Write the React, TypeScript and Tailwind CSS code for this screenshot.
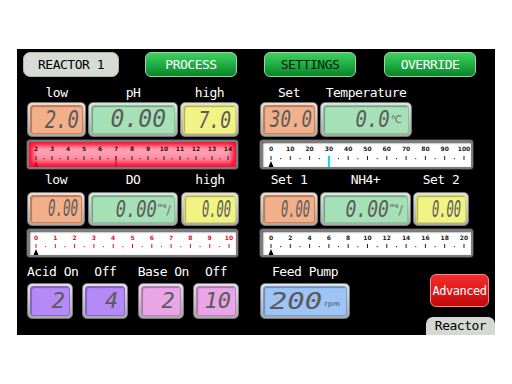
import React from "react";

type DisplayProps = {
  w: string;
  h: string;
  fill: string;
  edge: string;
  pr: string;
  children: React.ReactNode;
};

function Display({ w, h, fill, edge, pr, children }: DisplayProps) {
  return (
    <div
      className={`${w} ${h} shrink-0 rounded-[5px] border border-[#7a7a7a] bg-linear-to-b from-[#e2e2e2] to-[#a8a8a8] p-[2px]`}
    >
      <div
        className={`flex h-full w-full items-center justify-end overflow-hidden rounded-[3px] border ${edge} ${fill} ${pr} shadow-[inset_1px_1px_1px_rgba(0,0,0,0.3)]`}
      >
        {children}
      </div>
    </div>
  );
}

function Seg({ v, cls }: { v: string; cls: string }) {
  return (
    <span
      className={`inline-block whitespace-nowrap font-['DejaVu_Sans_Mono',monospace] italic leading-none text-[#5a5a5a] ${cls}`}
    >
      {v}
    </span>
  );
}

function MgL() {
  return (
    <span className="ml-[1px] inline-flex items-center font-['DejaVu_Sans',sans-serif] text-[#777777] leading-none">
      <span className="self-start text-[5px] font-bold">mg</span>
      <span className="text-[13px]">/</span>
    </span>
  );
}

type GaugeProps = {
  wCls: string;
  hCls: string;
  w: number;
  h: number;
  labels: string[];
  x0: number;
  step: number;
  red?: boolean;
  labelColor: string;
  tickColor: string;
  pointerColor: string;
  marker?: { x: number; color: string; width: number };
};

function Gauge({
  wCls,
  hCls,
  w,
  h,
  labels,
  x0,
  step,
  red,
  labelColor,
  tickColor,
  pointerColor,
  marker,
}: GaugeProps) {
  const iw = w - 6;
  const ih = h - 6;
  const inner = red
    ? "bg-linear-to-b from-[#ffb8c4] via-[#ff9aac] to-[#ff7088] shadow-[inset_0_0_5px_4px_#ff0a30]"
    : "bg-white shadow-[inset_1px_1px_2px_rgba(0,0,0,0.7)]";
  return (
    <div className={`${wCls} ${hCls} shrink-0 rounded-[4px] bg-[#2e2e2e] p-[1px]`}>
      <div className="h-full w-full rounded-[3px] border-2 border-[#7c7c7c]">
        <div className={`h-full w-full ${inner}`}>
          <svg width={iw} height={ih} className="block">
            {labels.map((l, i) => {
              const x = x0 + i * step;
              return (
                <g key={i}>
                  <text
                    x={x}
                    y={8.5}
                    fontSize={6}
                    fontWeight={700}
                    fontFamily="DejaVu Sans, sans-serif"
                    textAnchor="middle"
                    fill={labelColor}
                  >
                    {l}
                  </text>
                  <rect x={x - 0.5} y={ih - 11} width={1} height={4} fill={tickColor} />
                  {i < labels.length - 1 && (
                    <rect x={x + step / 2 - 0.5} y={ih - 9} width={1} height={1.2} fill={tickColor} />
                  )}
                </g>
              );
            })}
            {marker && (
              <rect
                x={marker.x - marker.width / 2}
                y={ih - 11}
                width={marker.width}
                height={11}
                fill={marker.color}
              />
            )}
            <polygon
              points={`${x0 - 2.5},${ih} ${x0 + 2.5},${ih} ${x0},${ih - 6}`}
              fill={pointerColor}
            />
          </svg>
        </div>
      </div>
    </div>
  );
}

function Label({ w, text }: { w: string; text: string }) {
  return (
    <div className={`${w} shrink-0 whitespace-nowrap text-center text-[13px] leading-none tracking-[-0.5px] text-white`}>
      {text}
    </div>
  );
}

function GreenBtn({ text, dark, ml }: { text: string; dark?: boolean; ml: string }) {
  return (
    <div
      className={`${ml} flex h-[25px] w-[92px] items-center justify-center rounded-[6px] border border-[#98d6a4] bg-linear-to-b from-[#3fd060] via-[#1fae44] to-[#0a8429] text-[13px] tracking-[-0.5px] ${
        dark ? "text-[#08200e]" : "text-white"
      }`}
    >
      {text}
    </div>
  );
}

const orange = "bg-[#f2b08a]";
const orangeEdge = "border-[#e4793f]";
const green = "bg-[#a6e0b6]";
const greenEdge = "border-[#7fc996]";
const yellow = "bg-[#f1f385]";
const yellowEdge = "border-[#d9db52]";
const purple = "bg-[#b58af7]";
const purpleEdge = "border-[#8f5fe0]";
const pink = "bg-[#e8a6e6]";
const pinkEdge = "border-[#cc78c9]";
const blue = "bg-[#9dc4f5]";
const blueEdge = "border-[#6f9fe0]";

export default function App() {
  const ph = ["2", "3", "4", "5", "6", "7", "8", "9", "10", "11", "12", "13", "14"];
  const temp = ["0", "10", "20", "30", "40", "50", "60", "70", "80", "90", "100"];
  const dO = ["0", "1", "2", "3", "4", "5", "6", "7", "8", "9", "10"];
  const nh = ["0", "2", "4", "6", "8", "10", "12", "14", "16", "18", "20"];

  return (
    <div className="flex h-[384px] w-[512px] items-center justify-center bg-white font-['DejaVu_Sans_Mono',monospace]">
      <div className="flex h-[286px] w-[478px] flex-col bg-black pt-[3px]">
        {/* top buttons */}
        <div className="flex h-[25px] shrink-0 pl-[6px]">
          <div className="flex h-[25px] w-[96px] items-center justify-center rounded-[7px] border border-[#aeb6ab] bg-[#d6dcd3] text-[13px] tracking-[-0.5px] text-black">
            REACTOR 1
          </div>
          <GreenBtn text="PROCESS" ml="ml-[26px]" />
          <GreenBtn text="SETTINGS" dark ml="ml-[27px]" />
          <GreenBtn text="OVERRIDE" ml="ml-[28px]" />
        </div>

        <div className="mt-[7px] flex flex-1 pl-[9px]">
          {/* left column */}
          <div className="flex w-[213px] shrink-0 flex-col">
            <div className="flex h-[17px] items-center gap-[2px] pl-[1px]">
              <Label w="w-[59px]" text="low" />
              <Label w="w-[90px]" text="pH" />
              <Label w="w-[59px]" text="high" />
            </div>
            <div className="mt-[1px] flex gap-[2px] pl-[1px]">
              <Display w="w-[59px]" h="h-[35px]" fill={orange} edge={orangeEdge} pr="pr-[3px]">
                <Seg v="2.0" cls="text-[19px] scale-y-[1.3]" />
              </Display>
              <Display w="w-[90px]" h="h-[35px]" fill={green} edge={greenEdge} pr="pr-[8px]">
                <Seg v="0.00" cls="text-[23px] scale-y-[1.05]" />
              </Display>
              <Display w="w-[59px]" h="h-[35px]" fill={yellow} edge={yellowEdge} pr="pr-[4px]">
                <Seg v="7.0" cls="text-[18px] scale-y-[1.3]" />
              </Display>
            </div>
            <div className="mt-[2px]">
              <Gauge
                wCls="w-[213px]"
                hCls="h-[31px]"
                w={213}
                h={31}
                labels={ph}
                x0={7}
                step={16}
                red
                labelColor="#1a1a1a"
                tickColor="#222222"
                pointerColor="#e00010"
                marker={{ x: 87, color: "#c4001a", width: 1 }}
              />
            </div>
            <div className="mt-[1px] flex h-[17px] items-center gap-[3px] pl-[1px]">
              <Label w="w-[58px]" text="low" />
              <Label w="w-[90px]" text="DO" />
              <Label w="w-[58px]" text="high" />
            </div>
            <div className="mt-[4px] flex gap-[3px] pl-[1px]">
              <Display w="w-[58px]" h="h-[34px]" fill={orange} edge={orangeEdge} pr="pr-[3px]">
                <Seg v="0.00" cls="text-[12.5px] scale-y-[1.85]" />
              </Display>
              <Display w="w-[90px]" h="h-[34px]" fill={green} edge={greenEdge} pr="pr-[3px]">
                <Seg v="0.00" cls="text-[17px] scale-y-[1.37]" />
                <MgL />
              </Display>
              <Display w="w-[58px]" h="h-[34px]" fill={yellow} edge={yellowEdge} pr="pr-[4px]">
                <Seg v="0.00" cls="text-[12px] scale-y-[1.9]" />
              </Display>
            </div>
            <div className="mt-[2px]">
              <Gauge
                wCls="w-[213px]"
                hCls="h-[30px]"
                w={213}
                h={30}
                labels={dO}
                x0={7}
                step={19.3}
                labelColor="#e0102a"
                tickColor="#e0102a"
                pointerColor="#000000"
              />
            </div>
            <div className="mt-[5px] flex h-[17px] items-center justify-between pl-[1px]">
              <Label w="w-[46px]" text="Acid On" />
              <Label w="w-[46px]" text="Off" />
              <Label w="w-[46px]" text="Base On" />
              <Label w="w-[46px]" text="Off" />
            </div>
            <div className="mt-[3px] flex justify-between pl-[1px]">
              <Display w="w-[46px]" h="h-[36px]" fill={purple} edge={purpleEdge} pr="pr-[4px]">
                <Seg v="2" cls="text-[22px] scale-y-[0.95]" />
              </Display>
              <Display w="w-[46px]" h="h-[36px]" fill={purple} edge={purpleEdge} pr="pr-[6px]">
                <Seg v="4" cls="text-[22px] scale-y-[0.95]" />
              </Display>
              <Display w="w-[46px]" h="h-[36px]" fill={pink} edge={pinkEdge} pr="pr-[5px]">
                <Seg v="2" cls="text-[22px] scale-y-[0.95]" />
              </Display>
              <Display w="w-[46px]" h="h-[36px]" fill={pink} edge={pinkEdge} pr="pr-[4px]">
                <Seg v="10" cls="text-[22px] scale-y-[0.95]" />
              </Display>
            </div>
          </div>

          {/* right column */}
          <div className="ml-[20px] flex flex-1 flex-col">
            <div className="flex h-[17px] items-center gap-[2px] pl-[1px]">
              <Label w="w-[58px]" text="Set" />
              <Label w="w-[92px]" text="Temperature" />
            </div>
            <div className="mt-[1px] flex gap-[2px] pl-[1px]">
              <Display w="w-[58px]" h="h-[35px]" fill={orange} edge={orangeEdge} pr="pr-[2px]">
                <Seg v="30.0" cls="text-[17.5px] scale-y-[1.3]" />
              </Display>
              <Display w="w-[92px]" h="h-[35px]" fill={green} edge={greenEdge} pr="pr-[6px]">
                <Seg v="0.0" cls="text-[19px] scale-y-[1.22]" />
                <span className="ml-[1px] font-['DejaVu_Sans',sans-serif] text-[10px] leading-none text-[#666666]">
                  ℃
                </span>
              </Display>
            </div>
            <div className="mt-[2px]">
              <Gauge
                wCls="w-[215px]"
                hCls="h-[31px]"
                w={215}
                h={31}
                labels={temp}
                x0={9}
                step={19.3}
                labelColor="#1a1a1a"
                tickColor="#222222"
                pointerColor="#000000"
                marker={{ x: 66.9, color: "#12d6ea", width: 2 }}
              />
            </div>
            <div className="mt-[1px] flex h-[17px] items-center gap-[2px] pl-[1px]">
              <Label w="w-[58px]" text="Set 1" />
              <Label w="w-[91px]" text="NH4+" />
              <Label w="w-[56px]" text="Set 2" />
            </div>
            <div className="mt-[4px] flex gap-[2px] pl-[1px]">
              <Display w="w-[58px]" h="h-[34px]" fill={orange} edge={orangeEdge} pr="pr-[4px]">
                <Seg v="0.00" cls="text-[12px] scale-y-[1.9]" />
              </Display>
              <Display w="w-[91px]" h="h-[34px]" fill={green} edge={greenEdge} pr="pr-[4px]">
                <Seg v="0.00" cls="text-[18px] scale-y-[1.3]" />
                <MgL />
              </Display>
              <Display w="w-[56px]" h="h-[34px]" fill={yellow} edge={yellowEdge} pr="pr-[4px]">
                <Seg v="0.00" cls="text-[12px] scale-y-[1.9]" />
              </Display>
            </div>
            <div className="mt-[2px]">
              <Gauge
                wCls="w-[215px]"
                hCls="h-[30px]"
                w={215}
                h={30}
                labels={nh}
                x0={9}
                step={19.3}
                labelColor="#1a1a1a"
                tickColor="#222222"
                pointerColor="#000000"
              />
            </div>
            <div className="mt-[5px] flex flex-1">
              <div className="flex flex-col pl-[1px]">
                <div className="flex h-[17px] items-center">
                  <Label w="w-[90px]" text="Feed Pump" />
                </div>
                <div className="mt-[3px]">
                  <Display w="w-[90px]" h="h-[36px]" fill={blue} edge={blueEdge} pr="pr-[6px]">
                    <Seg v="200" cls="text-[29px] scale-y-[0.8]" />
                    <span className="ml-[2px] mt-[6px] font-['DejaVu_Sans',sans-serif] text-[7px] font-bold leading-none text-[#6b7c95]">
                      rpm
                    </span>
                  </Display>
                </div>
              </div>
              <div className="flex flex-1 flex-col items-end pt-[11px]">
                <div className="mr-[6px] flex h-[33px] w-[59px] items-center justify-center rounded-[6px] border border-[#f58a8a] bg-linear-to-b from-[#f62a2a] to-[#c30808] text-[12px] tracking-[-0.5px] text-white">
                  Advanced
                </div>
                <div className="mt-[10px] flex h-[18px] w-[69px] items-center justify-center rounded-t-[7px] bg-[#d4dad2] text-[13px] tracking-[-0.5px] text-black">
                  Reactor
                </div>
              </div>
            </div>
          </div>
        </div>
      </div>
    </div>
  );
}
